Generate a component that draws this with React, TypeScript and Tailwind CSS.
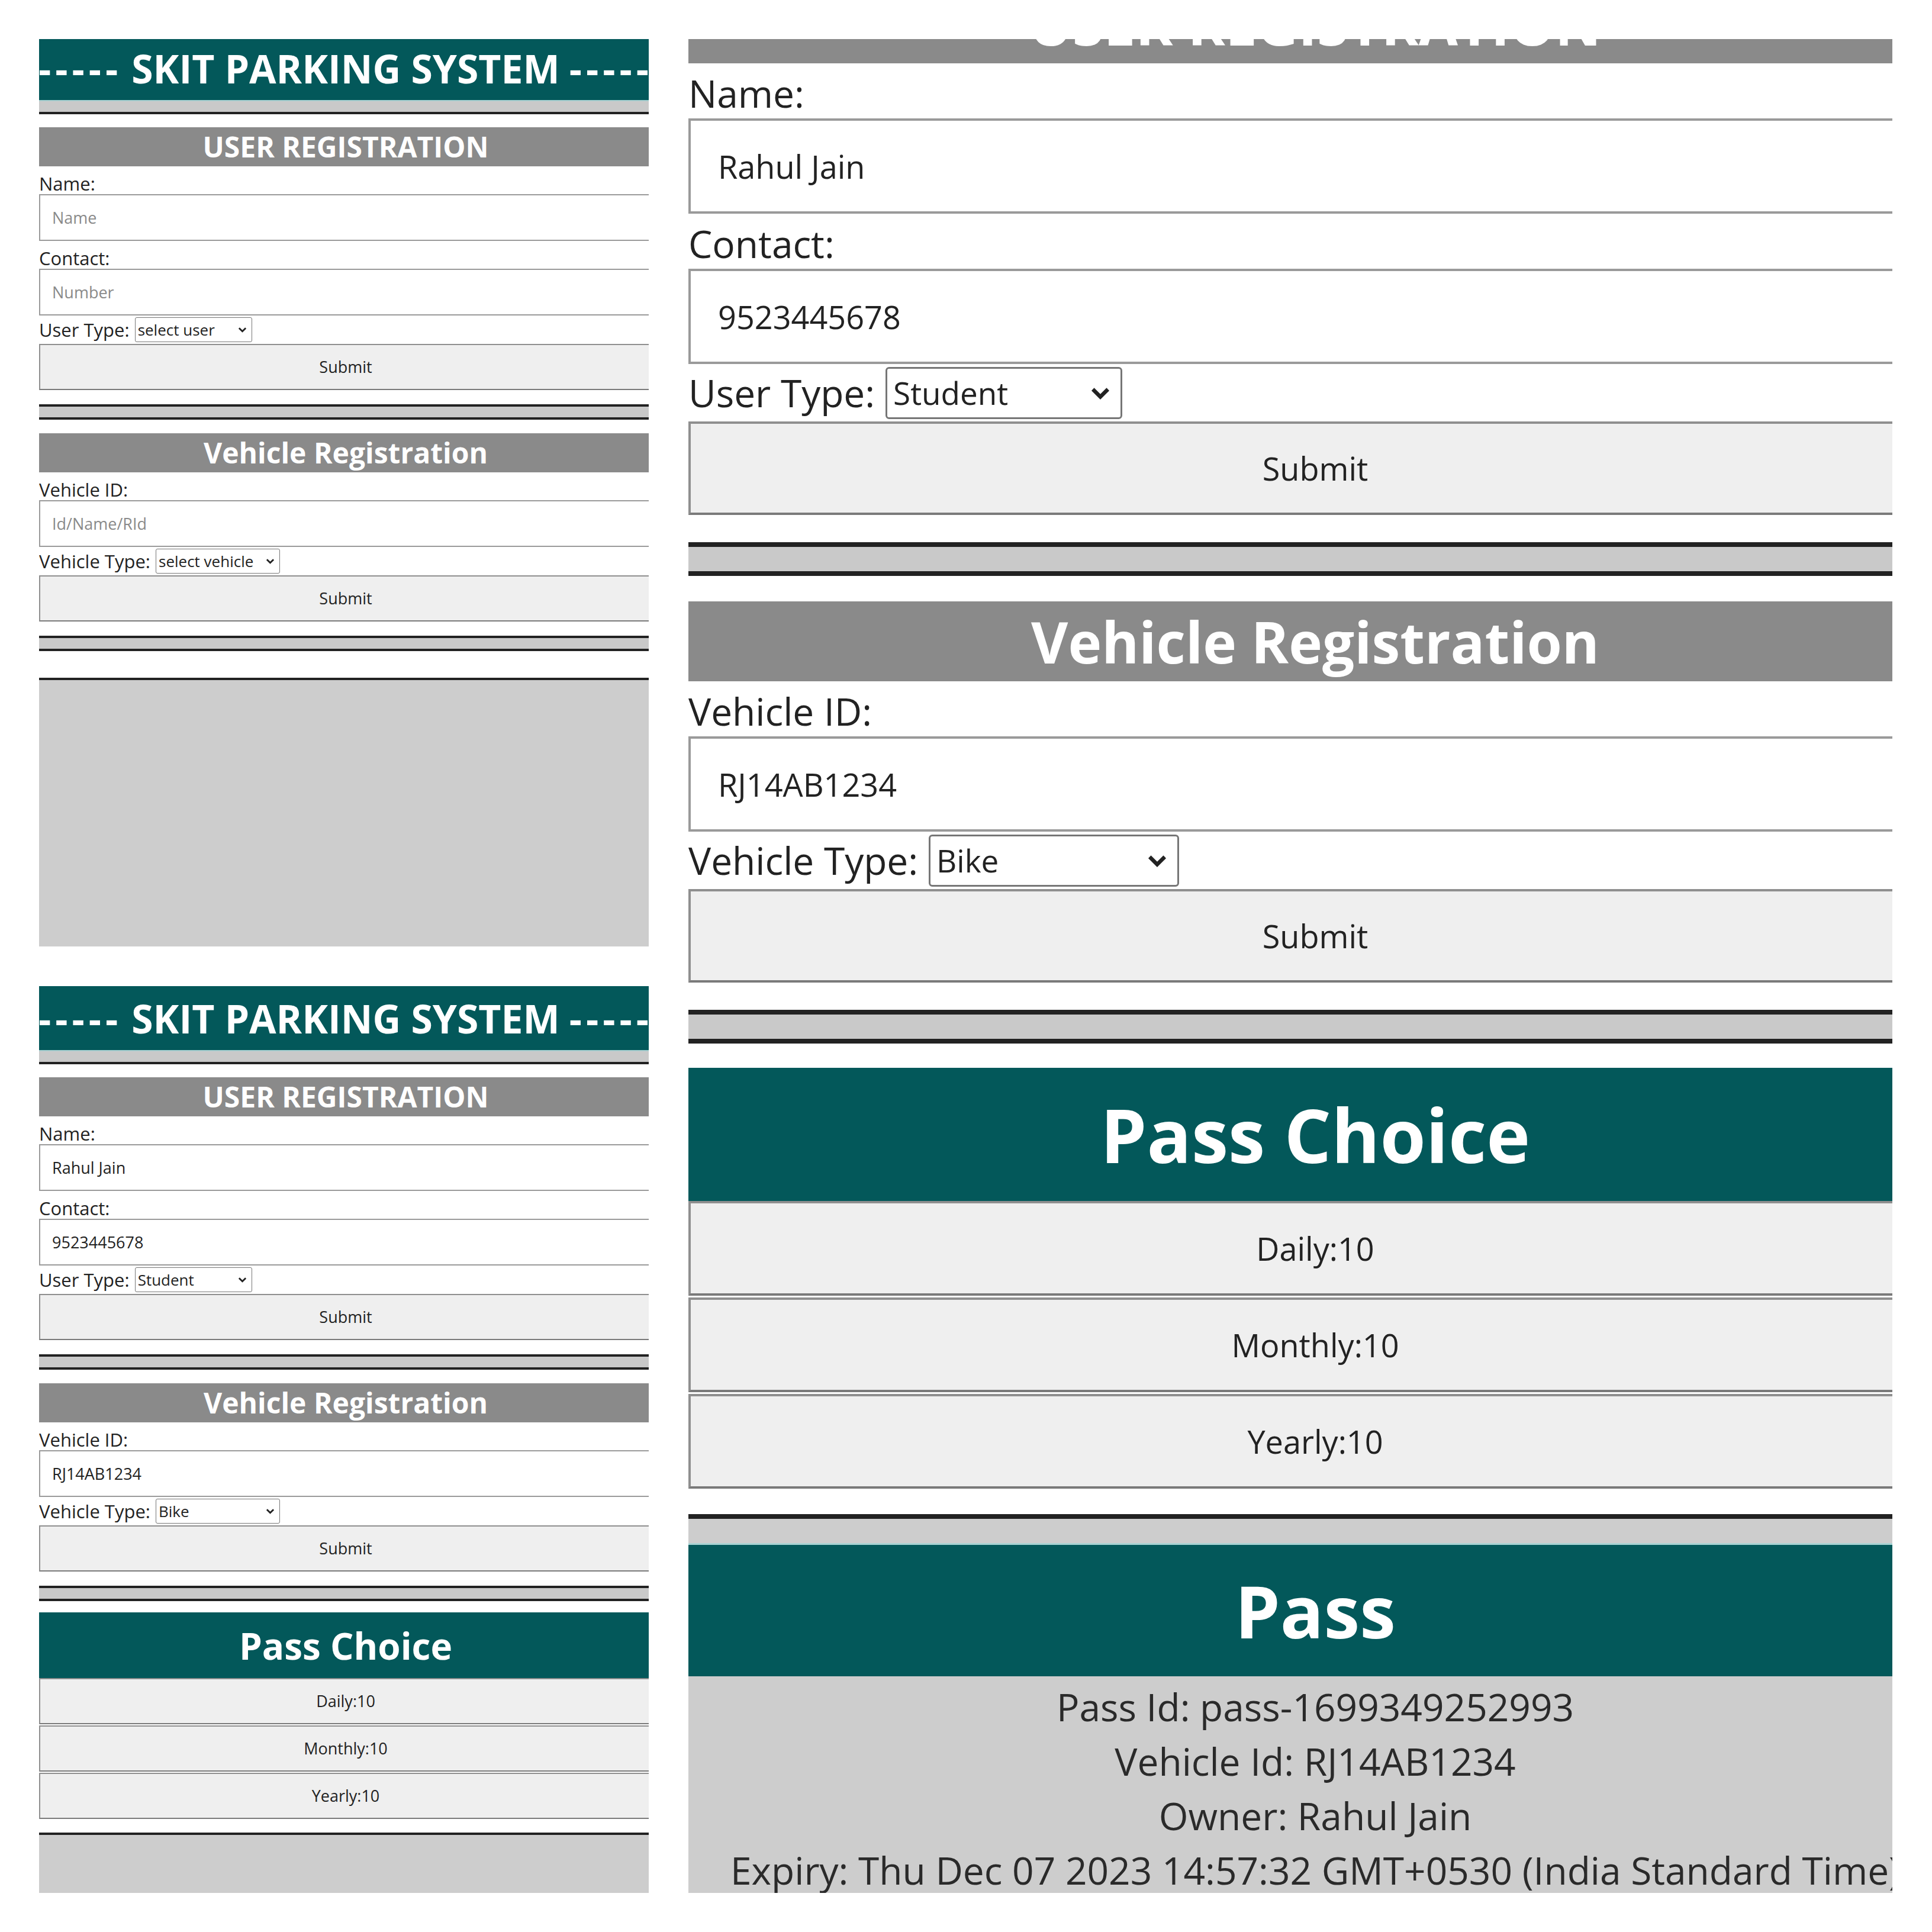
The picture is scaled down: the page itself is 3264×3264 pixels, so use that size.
import React from 'react'

// size sets: left screenshots are the page at 1x, the right one is zoomed ~2x
const SM = {
    inner: 'w-[1036px]',
    header: 'h-[108px] text-[66px] gap-[16px]',
    dash: 'tracking-[7px]',
    sep: 'h-[24px] border-t-2 border-b-4',
    barTop: 'mt-[22px]',
    bar: 'h-[66px] text-[48px]',
    barGap: 'mt-[23px]',
    label: 'h-[47px] text-[31px] leading-[58px]',
    input: 'h-[79px] text-[27px] px-[20px] border-2',
    row: 'h-[48px] text-[31px] gap-[9px]',
    select: 'h-[42px] text-[26px] pl-[4px] border-[1.5px] rounded-[3px]',
    userSel: 'w-[198px]',
    vehSel: 'w-[210px]',
    chev: 'right-[9px] w-[15px] h-[11px]',
    button: 'h-[78px] text-[27px] border-2',
    hr: 'h-[26px] border-y-4 mt-[24px]',
    choice: 'h-[111px] text-[62px] mt-[19px]',
    choiceBtn: 'h-[78px] text-[27px] border-2 mt-[2px]',
    passGap: 'mt-[23px] border-t-4',
    passTitle: 'h-[112px] text-[60px] border-t-2',
    passPad: 'pt-[20px]',
    details: 'pt-[4px] text-[31px] leading-[45px]',
}

const LG = {
    inner: 'w-[2118px]',
    header: 'h-[220px] text-[134px] gap-[32px]',
    dash: 'tracking-[14px]',
    sep: 'h-[48px] border-t-4 border-b-8',
    barTop: '-mt-[94px]',
    bar: 'h-[135px] text-[96px]',
    barGap: 'mt-[43px]',
    label: 'h-[93px] text-[64px] leading-[102px]',
    input: 'h-[161px] text-[54px] px-[46px] border-[4px]',
    row: 'h-[97px] text-[64px] gap-[18px]',
    select: 'h-[88px] text-[53px] pl-[10px] border-[3px] rounded-[6px]',
    userSel: 'w-[400px]',
    vehSel: 'w-[423px]',
    chev: 'right-[20px] w-[34px] h-[24px]',
    button: 'h-[158px] text-[54px] border-[4px]',
    hr: 'h-[57px] border-y-[8px] mt-[46px]',
    choice: 'h-[225px] text-[125px] mt-[41px]',
    choiceBtn: 'h-[160px] text-[54px] border-[4px] mt-[3px]',
    passGap: 'mt-[43px] border-t-8',
    passTitle: 'h-[225px] text-[122px] border-t-[3px]',
    passPad: 'pt-[41px]',
    details: 'pt-[6px] text-[64px] leading-[92px]',
}

type Sz = typeof SM

function Bar({ s, top, children }: { s: Sz, top?: boolean, children: React.ReactNode }) {
    return (
        <div className={`${s.bar} ${top ? s.barTop : s.barGap} bg-[#8a8a8a] text-white font-bold leading-none whitespace-nowrap flex items-center justify-center`}>
            {children}
        </div>
    )
}

function Field({ s, label, value, placeholder }: { s: Sz, label: string, value: string, placeholder: string }) {
    return (
        <>
            <div className={`${s.label} whitespace-nowrap`}>{label}</div>
            <input
                readOnly
                defaultValue={value}
                placeholder={placeholder}
                className={`${s.input} block w-full bg-white text-[#222] placeholder:text-[#8a8a8a] border-[#9a9a9a] outline-none`}
            />
        </>
    )
}

function Select({ s, width, value, options }: { s: Sz, width: string, value: string, options: string[] }) {
    return (
        <div className={`relative ${width}`}>
            <select
                defaultValue={value}
                className={`${s.select} ${width} block appearance-none bg-white text-[#222] border-[#767676] outline-none`}
            >
                {options.map(o => <option key={o}>{o}</option>)}
            </select>
            <svg viewBox="0 0 16 11" className={`${s.chev} absolute top-1/2 -translate-y-1/2 text-[#222] pointer-events-none`}>
                <path d="M2 2.5 L8 8.5 L14 2.5" fill="none" stroke="currentColor" strokeWidth="3" />
            </svg>
        </div>
    )
}

function Button({ cls, children }: { cls: string, children: React.ReactNode }) {
    return (
        <button className={`${cls} block w-full bg-[#efefef] border-[#8f8f8f] border-b-[#7a7a7a] text-[#222]`}>
            {children}
        </button>
    )
}

function Hr({ s }: { s: Sz }) {
    return <div className={`${s.hr} bg-[#c9c9c9] border-[#222]`} />
}

type PageProps = {
    s: Sz
    header?: string
    filled?: boolean
    choice?: boolean
    pass?: boolean
}

function Page({ s, header, filled, choice, pass }: PageProps) {
    return (
        <div className={s.inner}>
            {header !== undefined && (
                <>
                    <div className={`${s.header} ${header} bg-[#03585a] text-white font-bold leading-none whitespace-nowrap flex items-center justify-center`}>
                        <span className={s.dash}>-----</span>
                        <span>SKIT PARKING SYSTEM</span>
                        <span className={s.dash}>-----</span>
                    </div>
                    <div className={`${s.sep} bg-[#c9c9c9] border-t-[#a9d0d1] border-b-[#222]`} />
                </>
            )}

            <Bar s={s} top>USER REGISTRATION</Bar>
            <Field s={s} label="Name:" value={filled ? 'Rahul Jain' : ''} placeholder="Name" />
            <Field s={s} label="Contact:" value={filled ? '9523445678' : ''} placeholder="Number" />
            <div className={`${s.row} flex items-center whitespace-nowrap`}>
                <span>User Type:</span>
                <Select s={s} width={s.userSel} value={filled ? 'Student' : 'select user'} options={['select user', 'Student', 'Faculty']} />
            </div>
            <Button cls={s.button}>Submit</Button>

            <Hr s={s} />

            <Bar s={s}>Vehicle Registration</Bar>
            <Field s={s} label="Vehicle ID:" value={filled ? 'RJ14AB1234' : ''} placeholder="Id/Name/RId" />
            <div className={`${s.row} flex items-center whitespace-nowrap`}>
                <span>Vehicle Type:</span>
                <Select s={s} width={s.vehSel} value={filled ? 'Bike' : 'select vehicle'} options={['select vehicle', 'Bike', 'Car']} />
            </div>
            <Button cls={s.button}>Submit</Button>

            <Hr s={s} />

            {choice && (
                <>
                    <div className={`${s.choice} bg-[#03585a] text-white font-bold leading-none flex items-center justify-center`}>
                        Pass Choice
                    </div>
                    <Button cls={`${s.choiceBtn} !mt-0`}>Daily:10</Button>
                    <Button cls={s.choiceBtn}>Monthly:10</Button>
                    <Button cls={s.choiceBtn}>Yearly:10</Button>
                </>
            )}

            {/* pass section: empty grey block until a pass is bought */}
            <div className={`${choice ? s.passGap : 'mt-[45px] border-t-4'} ${pass ? s.passPad : ''} h-[2000px] bg-[#cdcdcd] border-[#222]`}>
                {pass && (
                    <>
                        <div className={`${s.passTitle} bg-[#03585a] border-[#a9d3d4] text-white font-bold leading-none flex items-center justify-center`}>
                            Pass
                        </div>
                        <div className={`${s.details} text-center whitespace-nowrap text-[#2a2a2a]`}>
                            <p>Pass Id: pass-1699349252993</p>
                            <p>Vehicle Id: RJ14AB1234</p>
                            <p>Owner: Rahul Jain</p>
                            <p>Expiry: Thu Dec 07 2023 14:57:32 GMT+0530 (India Standard Time)</p>
                        </div>
                    </>
                )}
            </div>
        </div>
    )
}

export default function App() {
    return (
        <div className="w-[3264px] h-[3264px] bg-white p-[66px] flex gap-[67px] font-['Open_Sans',sans-serif] text-[#222]">
            <div className="w-[1030px] flex flex-col gap-[67px]">
                <div className="h-[1533px] overflow-hidden">
                    <Page s={SM} header="-mt-[5px]" />
                </div>
                <div className="h-[1532px] overflow-hidden">
                    <Page s={SM} header="" filled choice />
                </div>
            </div>
            <div className="w-[2034px] h-[3132px] overflow-hidden">
                <Page s={LG} filled choice pass />
            </div>
        </div>
    )
}
